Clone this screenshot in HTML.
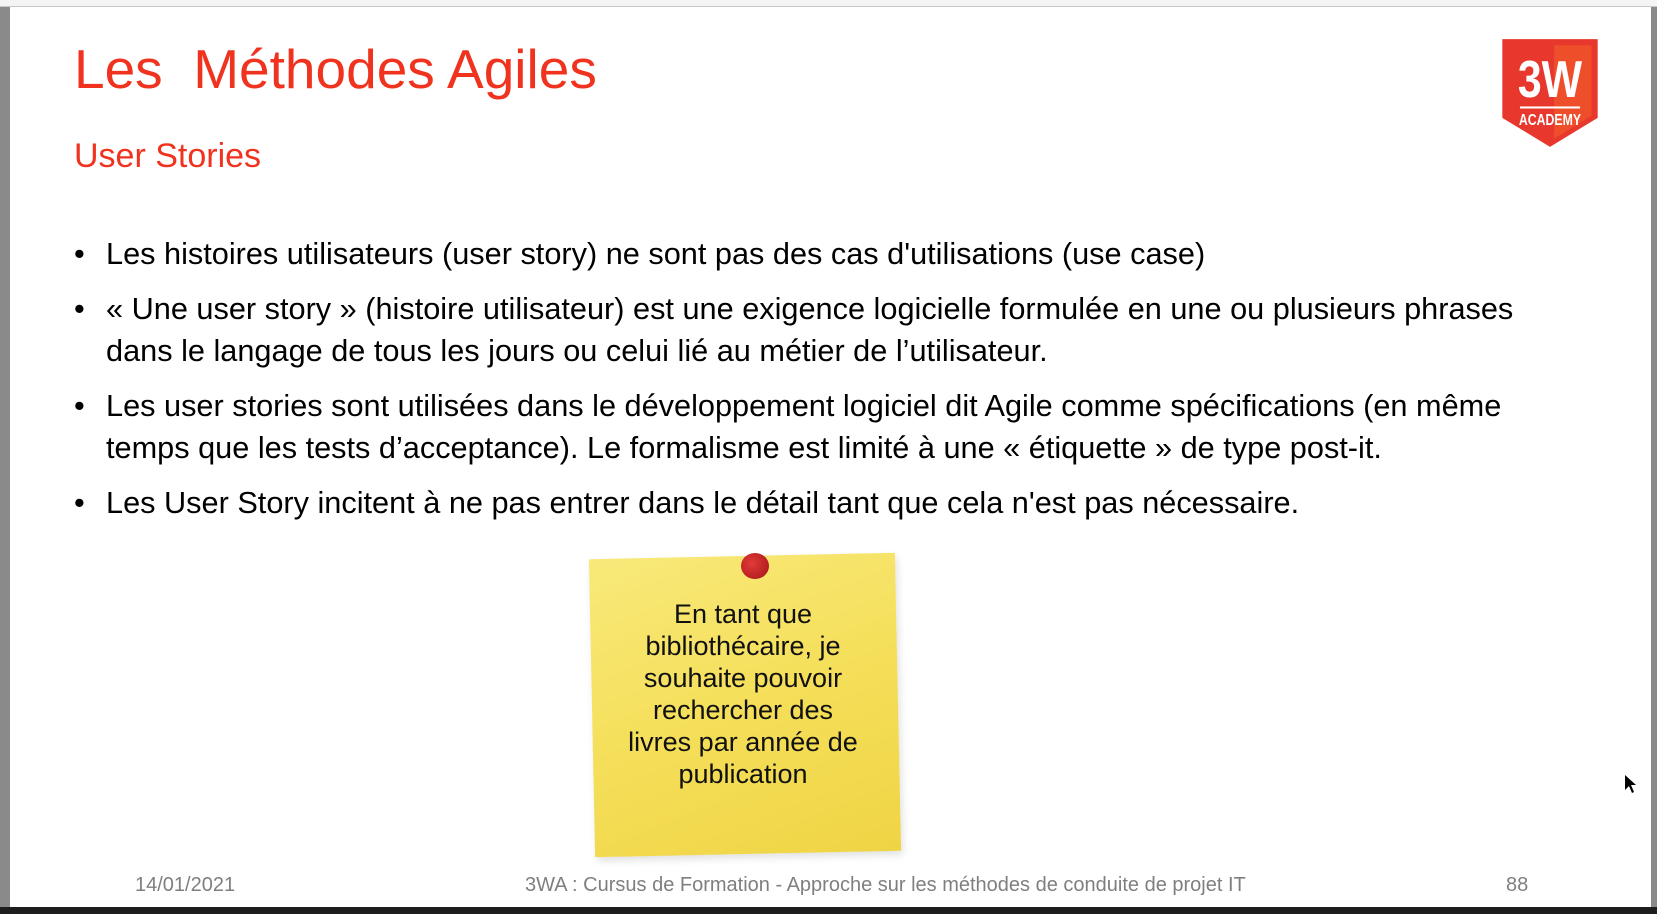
<!DOCTYPE html>
<html><head><meta charset="utf-8"><style>
html,body{margin:0;padding:0}
body{width:1657px;height:914px;position:relative;overflow:hidden;background:#fff;font-family:"Liberation Sans",Arial,sans-serif}
.abs{position:absolute;white-space:nowrap}
h1{position:absolute;left:74px;top:37px;margin:0;font-weight:normal;font-size:55px;line-height:normal;color:#f0331f}
.sub{left:74px;top:137px;font-size:34px;color:#f0331f}
ul{position:absolute;left:74px;top:233px;margin:0;padding:0;list-style:none;font-size:30.7px;color:#000;line-height:42px;white-space:nowrap}
li{position:relative;padding-left:32px;margin-bottom:13px}
li:before{content:"•";position:absolute;left:0}
.foot{font-size:20px;color:#7f7f7f;top:874px}
</style></head><body>
<div class="abs" style="left:0;top:0;width:10px;height:914px;background:#8a8a8a"></div>
<div class="abs" style="left:1651px;top:0;width:6px;height:914px;background:#8a8a8a"></div>
<div class="abs" style="left:0;top:0;width:1657px;height:6px;background:#f4f4f4;border-bottom:1px solid #c8c8c8"></div>
<div class="abs" style="left:0;top:907px;width:1657px;height:7px;background:#1e1e1e"></div>

<h1>Les&nbsp; Méthodes Agiles</h1>
<div class="abs sub">User Stories</div>

<svg class="abs" style="left:1500px;top:37px" width="100" height="114" viewBox="0 0 96 110">
<path d="M2 2H94V78L48 106L2 78Z" fill="#e8372c"/>
<path d="M52 8H88V76L52 98Z" fill="#ee4f2a"/>
<text x="48" y="58" text-anchor="middle" font-family="Liberation Sans Narrow,Liberation Sans,sans-serif" font-weight="bold" font-size="50" fill="#fff" textLength="62" lengthAdjust="spacingAndGlyphs">3W</text>
<rect x="19" y="67" width="58" height="2" fill="#fff"/>
<text x="48" y="85" text-anchor="middle" font-family="Liberation Sans Narrow,Liberation Sans,sans-serif" font-weight="bold" font-size="15" fill="#fff" textLength="60" lengthAdjust="spacingAndGlyphs">ACADEMY</text>
</svg>

<ul>
<li>Les histoires utilisateurs (user story) ne sont pas des cas d'utilisations (use case)</li>
<li>« Une user story » (histoire utilisateur) est une exigence logicielle formulée en une ou plusieurs phrases<br>dans le langage de tous les jours ou celui lié au métier de l’utilisateur.</li>
<li>Les user stories sont utilisées dans le développement logiciel dit Agile comme spécifications (en même<br>temps que les tests d’acceptance). Le formalisme est limité à une « étiquette » de type post-it.</li>
<li>Les User Story incitent à ne pas entrer dans le détail tant que cela n'est pas nécessaire.</li>
</ul>

<div class="abs" style="left:592px;top:556px;width:306px;height:298px;background:linear-gradient(160deg,#f8e97a 0%,#f5df5a 50%,#efd444 100%);transform:rotate(-1.2deg);box-shadow:2px 4px 8px rgba(0,0,0,.12)"></div>
<div class="abs" style="left:741px;top:553px;width:28px;height:26px;border-radius:50%;background:radial-gradient(circle at 40% 40%,#e23a3a,#a41515)"></div>
<div class="abs" style="left:583px;top:598px;width:320px;text-align:center;white-space:normal;font-size:27px;line-height:32px;color:#111">En tant que<br>bibliothécaire, je<br>souhaite pouvoir<br>rechercher des<br>livres par année de<br>publication</div>

<svg class="abs" style="left:1624px;top:774px" width="14" height="20" viewBox="0 0 14 20"><path d="M1 1V16L5 12L8 19L10 18L7 11H12Z" fill="#000"/></svg>

<div class="abs foot" style="left:135px">14/01/2021</div>
<div class="abs foot" style="left:525px">3WA : Cursus de Formation - Approche sur les méthodes de conduite de projet IT</div>
<div class="abs foot" style="left:1506px">88</div>
</body></html>
